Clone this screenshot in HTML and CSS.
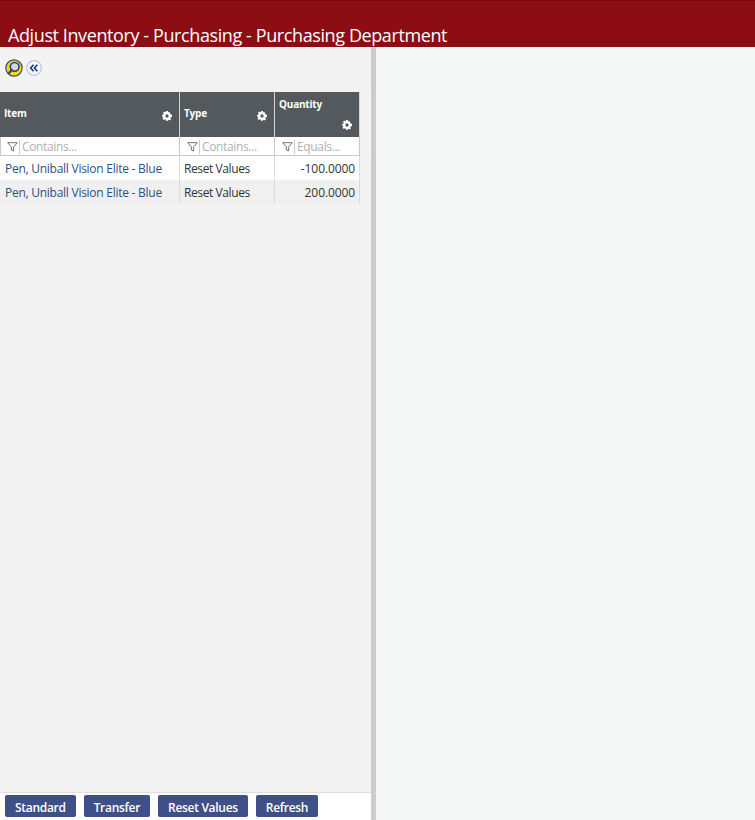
FILE: index.html
```html
<!DOCTYPE html>
<html lang="en">
<head>
<meta charset="utf-8">
<title>Adjust Inventory</title>
<link rel="stylesheet" href="styles.css">
</head>
<body>
<header class="title-bar"><h1 class="title">Adjust Inventory - Purchasing - Purchasing Department</h1></header>
<div class="split">
  <section class="left">
    <div class="tools">
      <svg class="icon" width="18" height="18" viewBox="0 0 19 19"><circle cx="9.500" cy="9.500" r="8.600" fill="#f5d90a" stroke="#3c4a7a" stroke-width="1.300"/><circle cx="10.200" cy="8.300" r="4.600" fill="#cfd8ea" stroke="#2f3f70" stroke-width="1.700"/><path d="M7 11.500 4.500 14.500" stroke="#2f3f70" stroke-width="2.300" stroke-linecap="round"/></svg>
      <svg class="icon second" width="16" height="16" viewBox="0 0 17 17"><circle cx="8.500" cy="8.500" r="7.800" fill="#f4f6fb" stroke="#bcc5e0" stroke-width="1.300"/><path d="M8 5 5 8.500 8 12M12 5 9 8.500 12 12" fill="none" stroke="#1b3a8c" stroke-width="1.800"/></svg>
    </div>
    <div class="grid-wrap">
      <table class="grid">
        <colgroup><col class="c1"><col class="c2"><col class="c3"></colgroup>
        <thead>
          <tr class="heads">
            <th><div class="head"><span class="name mid">Item</span><svg class="gear" viewBox="0 0 12 12"><use href="#g"/></svg></div></th>
            <th><div class="head"><span class="name mid">Type</span><svg class="gear" viewBox="0 0 12 12"><use href="#g"/></svg></div></th>
            <th><div class="head"><span class="name top">Quantity</span><svg class="gear" viewBox="0 0 12 12"><use href="#g"/></svg></div></th>
          </tr>
          <tr class="filters">
            <td><div class="filter"><svg class="funnel" viewBox="0 0 11 10"><path d="M.7.7h9.600L6.600 5v4L4.400 8V5z" fill="none" stroke="#666" stroke-width=".9"/></svg><span class="ph">Contains...</span></div></td>
            <td><div class="filter"><svg class="funnel" viewBox="0 0 11 10"><path d="M.7.7h9.600L6.600 5v4L4.400 8V5z" fill="none" stroke="#666" stroke-width=".9"/></svg><span class="ph">Contains...</span></div></td>
            <td><div class="filter"><svg class="funnel" viewBox="0 0 11 10"><path d="M.7.7h9.600L6.600 5v4L4.400 8V5z" fill="none" stroke="#666" stroke-width=".9"/></svg><span class="ph">Equals...</span></div></td>
          </tr>
        </thead>
        <tbody>
          <tr class="row"><td class="link">Pen, Uniball Vision Elite - Blue</td><td class="text">Reset Values</td><td class="num">-100.0000</td></tr>
          <tr class="row alt"><td class="link">Pen, Uniball Vision Elite - Blue</td><td class="text">Reset Values</td><td class="num">200.0000</td></tr>
        </tbody>
      </table>
      <div class="strip"></div>
    </div>
    <footer class="actions">
      <button class="btn">Standard</button>
      <button class="btn">Transfer</button>
      <button class="btn">Reset Values</button>
      <button class="btn">Refresh</button>
    </footer>
  </section>
  <div class="splitter"></div>
  <section class="right"></section>
</div>
<svg class="defs" width="0" height="0"><defs><path id="g" fill="#fff" fill-rule="evenodd" d="M4.900 0h2.200l.3 1.600 1-.4L9.800 2.100 9.300 3.300l1.400.6L12 4.900v2.200l-1.500.3-.5 1.200.8 1.300-1.500 1.500-1.300-.8-1.200.5L6.500 12H5l-.4-1.600-1.200-.5-1.300.8L.6 9.200l.8-1.300-.5-1.200L0 6.500V4.900l1.500-.4.5-1.200L1.200 2 2.700.6l1.300.8 1-.5zM6 4a2 2 0 1 0 0 4 2 2 0 0 0 0-4z"/></defs></svg>
</body>
</html>
```
FILE: styles.css
```css
* { box-sizing: border-box; }
html, body { margin: 0; height: 100%; overflow: hidden; }
body { font-family: "Open Sans", "Noto Sans", sans-serif; background: #f5f7f7; }
.title-bar { height: 47px; background: #8d0d15; border-top: 1px solid #7a0a12; display: flex; align-items: flex-end; padding: 0 0 0 8px; }
.title { margin: 0; color: #fff; font-size: 18px; font-weight: 400; letter-spacing: -.4px; line-height: 24px; white-space: nowrap; }
.split { display: flex; height: 773px; }
.left { width: 371px; background: #f3f3f3; display: flex; flex-direction: column; }
.splitter { width: 5px; background: #cccccc; }
.right { flex: 1; background: #f5f7f7; }
.tools { height: 45px; padding: 12px 0 0 5px; display: flex; align-items: flex-start; gap: 3px; }
.icon { display: block; }
.second { margin-top: 1px; }
.grid-wrap { flex: 1; display: flex; align-items: flex-start; }
.grid { border-collapse: separate; border-spacing: 0; table-layout: fixed; width: 360px; font-size: 12px; }
.c1 { width: 180px; }
.c2 { width: 95px; }
.c3 { width: 85px; }
.heads th { height: 45px; padding: 0; background: #53595c; border-right: 1px solid #d4d6d6; vertical-align: top; }
.head { position: relative; height: 45px; color: #fff; font-size: 10px; font-weight: 700; text-align: left; letter-spacing: -.2px; }
.name { position: absolute; left: 4px; line-height: 14px; }
.name.mid { top: 14px; }
.name.top { top: 5px; }
.gear { position: absolute; right: 7px; bottom: 16px; width: 10px; height: 10px; }
.heads th:last-child .gear { bottom: 7px; }
.filters td { height: 19px; padding: 0; background: #fff; border-right: 1px solid #c9c9c9; border-bottom: 1px solid #c9c9c9; }
.filters td:first-child { border-left: 1px solid #c9c9c9; }
.filter { display: flex; align-items: center; height: 18px; padding: 1px 0 0 6px; overflow: hidden; }
.filters td:nth-child(n+2) .filter { padding-left: 7px; }
.funnel { width: 11px; height: 10px; flex: none; }
.ph { margin-left: 1px; padding-left: 2px; border-left: 1px solid #ccc; color: #b0b0b0; font-size: 12px; letter-spacing: -.35px; line-height: 14px; }
.row td { height: 24px; padding: 0 4px; background: #fff; color: #333; border-right: 1px solid #dcdcdc; white-space: nowrap; overflow: hidden; }
.row.alt td { background: #f0f0f0; }
.row td.link { color: #2a5289; padding-left: 5px; letter-spacing: -.26px; }
.row td.text { letter-spacing: -.4px; }
.row td.num { text-align: right; letter-spacing: -.1px; }
.strip { width: 1px; margin-left: 10px; height: 64px; background: #f8f8f8; }
.actions { height: 28px; background: #fff; border-top: 1px solid #dfdfdf; display: flex; gap: 8px; padding: 2px 0 0 5px; align-items: flex-start; }
.btn { height: 22px; padding: 3px 10px 0; border: 0; border-radius: 2px; background: #3f4f88; color: #fff; font-family: inherit; font-size: 12px; font-weight: 600; letter-spacing: -.3px; line-height: 19px; }
.defs { position: absolute; }
```
